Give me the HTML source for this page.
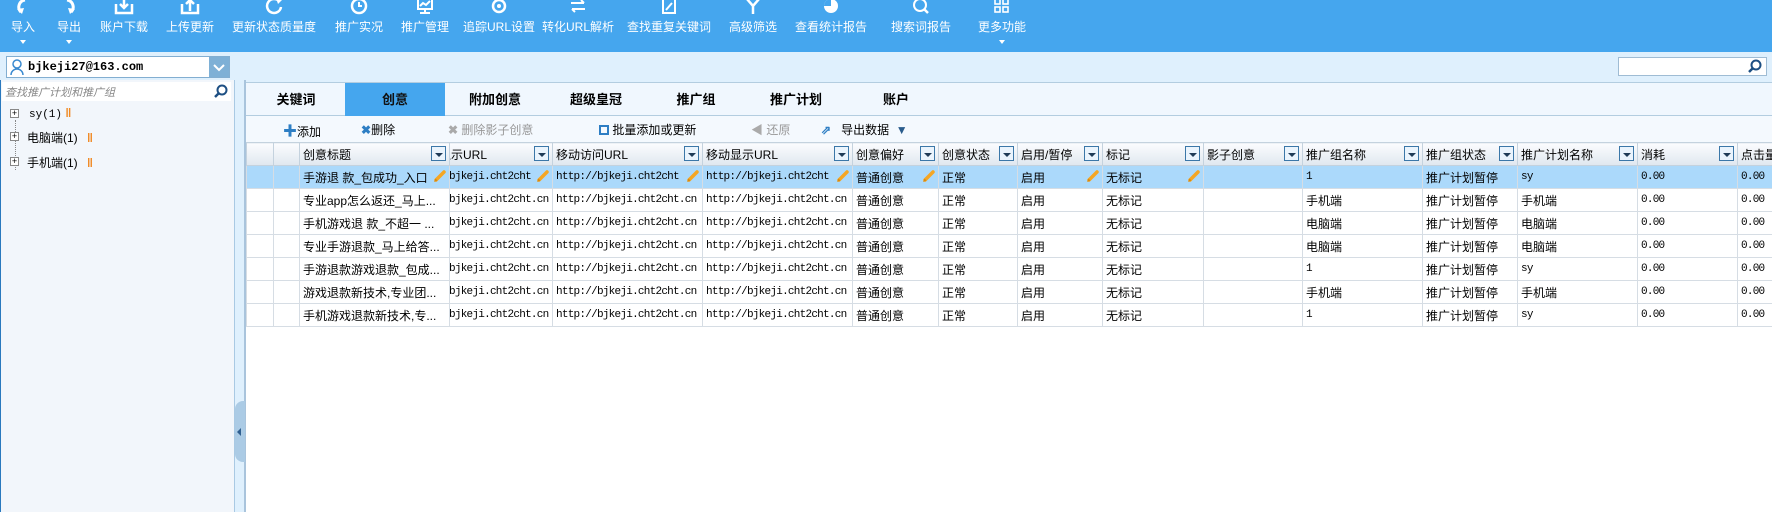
<!DOCTYPE html>
<html><head><meta charset="utf-8"><style>
*{margin:0;padding:0;box-sizing:border-box}
body{width:1772px;height:512px;overflow:hidden;position:relative;background:#fff;font-family:"Liberation Sans","Noto Sans CJK SC",sans-serif;font-size:12px;color:#000}
.a{position:absolute}
#tb{left:0;top:0;width:1772px;height:52px;background:#45a6ee}
.tbi{position:absolute;top:-2px;height:52px;color:#fff;font-size:12px;text-align:center;white-space:nowrap}
.tbi svg{display:block;margin:0 auto}
.tbi span{display:block;position:absolute;top:20px;left:50%;transform:translateX(-50%)}
.dd{position:absolute;top:42px;left:50%;margin-left:-3px;width:0;height:0;border-left:3px solid transparent;border-right:3px solid transparent;border-top:4px solid #fff}
#strip{left:0;top:52px;width:1772px;height:30px;background:#dff0fd}
#left{left:0;top:80px;width:234px;height:432px;background:#f2f6fb;border-left:1px solid #2a79be}
#split{left:234px;top:80px;width:12px;height:432px;background:#dff0fd;border-left:1px solid #a9c9e3;border-right:2px solid #a9c4dc}
#tabs{left:246px;top:82px;width:1526px;height:34px;background:#f0f7fe;border-top:1px solid #b3cde0;border-bottom:1px solid #b3cde0}
.tab{position:absolute;top:0;width:100px;height:33px;line-height:33px;text-align:center;font-weight:bold;font-size:13px}
#tools{left:246px;top:116px;width:1526px;height:27px;background:#f4f9fe}
.tl{position:absolute;top:5px;font-size:12px;white-space:nowrap}
table{position:absolute;left:246px;top:142px;border-collapse:collapse;table-layout:fixed;width:1560px}
td,th{border:1px solid #d6dde4;height:23px;padding:0 3px;overflow:hidden;white-space:nowrap;font-weight:normal;text-align:left;font-size:12px;position:relative}
th{background:linear-gradient(#fbfcfe,#dfe7ef);border-color:#c4d2de;height:23px}
th i{position:absolute;right:3px;top:3px;width:15px;height:15px;border:1px solid #3b77a8;background:#eaf4fd}
th i:after{content:"";position:absolute;left:3px;top:6px;border-left:4px solid transparent;border-right:4px solid transparent;border-top:4px solid #1f3b57}
tr.sel td{background:#abd9fb}
.m{font-family:"Liberation Mono",monospace;font-size:11px;letter-spacing:-0.75px}
.pen{position:absolute;right:2px;top:3px;width:14px;height:14px;background:#abd9fb}
</style></head><body>
<svg width="0" height="0" style="position:absolute"><defs><symbol id="p" viewBox="0 0 14 14"><path d="M3 11 L11 3" stroke="#f5a623" stroke-width="3.5" stroke-linecap="round"/><path d="M1 13 L2.5 9.5 L4.5 11.5z" fill="#d88a10"/></symbol></defs></svg>
<div id="tb" class="a">
 <div class="tbi" style="left:8px;width:30px"><svg width="20" height="18" viewBox="0 0 20 18"><path d="M12 2 A7 7 0 0 0 8 14" stroke="#fff" stroke-width="3" fill="none"/><path d="M4 11 L9 16 L11 10z" fill="#fff"/></svg><span>导入</span><div class="dd"></div></div>
 <div class="tbi" style="left:54px;width:30px"><svg width="20" height="18" viewBox="0 0 20 18"><path d="M8 2 A7 7 0 0 1 12 14" stroke="#fff" stroke-width="3" fill="none"/><path d="M16 11 L11 16 L9 10z" fill="#fff"/></svg><span>导出</span><div class="dd"></div></div>
 <div class="tbi" style="left:104px;width:40px"><svg width="20" height="17" viewBox="0 0 20 17"><path d="M2 6 V15 H18 V6" stroke="#fff" stroke-width="2.5" fill="none"/><path d="M10 0 V10 M6 6 L10 10 L14 6" stroke="#fff" stroke-width="2.5" fill="none"/></svg><span>账户下载</span></div>
 <div class="tbi" style="left:170px;width:40px"><svg width="20" height="17" viewBox="0 0 20 17"><path d="M2 6 V15 H18 V6" stroke="#fff" stroke-width="2.5" fill="none"/><path d="M10 13 V2 M6 6 L10 2 L14 6" stroke="#fff" stroke-width="2.5" fill="none"/></svg><span>上传更新</span></div>
 <div class="tbi" style="left:254px;width:40px"><svg width="20" height="17" viewBox="0 0 20 17"><path d="M15 3 A7 7 0 1 0 17 9" stroke="#fff" stroke-width="2.5" fill="none"/><path d="M12 0 L18 2 L14 6z" fill="#fff"/></svg><span>更新状态质量度</span></div>
 <div class="tbi" style="left:339px;width:40px"><svg width="20" height="17" viewBox="0 0 20 17"><circle cx="10" cy="8" r="7" stroke="#fff" stroke-width="2.5" fill="none"/><path d="M10 4 V8 H13" stroke="#fff" stroke-width="2" fill="none"/></svg><span>推广实况</span></div>
 <div class="tbi" style="left:405px;width:40px"><svg width="20" height="17" viewBox="0 0 20 17"><rect x="3" y="1" width="14" height="10" stroke="#fff" stroke-width="2" fill="none"/><path d="M5 15 H15 M10 11 V15 M5 8 L8 5 L11 7 L15 3" stroke="#fff" stroke-width="2" fill="none"/></svg><span>推广管理</span></div>
 <div class="tbi" style="left:479px;width:40px"><svg width="20" height="17" viewBox="0 0 20 17"><circle cx="10" cy="8" r="6" stroke="#fff" stroke-width="2.5" fill="none"/><circle cx="10" cy="8" r="2" fill="#fff"/></svg><span>追踪URL设置</span></div>
 <div class="tbi" style="left:558px;width:40px"><svg width="20" height="17" viewBox="0 0 20 17"><path d="M3 5 H16 M13 2 L16 5 M17 11 H4 M7 14 L4 11" stroke="#fff" stroke-width="2" fill="none"/></svg><span>转化URL解析</span></div>
 <div class="tbi" style="left:649px;width:40px"><svg width="20" height="17" viewBox="0 0 20 17"><rect x="4" y="0" width="12" height="15" stroke="#fff" stroke-width="2" fill="none"/><path d="M7 12 L13 5" stroke="#fff" stroke-width="2"/></svg><span>查找重复关键词</span></div>
 <div class="tbi" style="left:733px;width:40px"><svg width="20" height="17" viewBox="0 0 20 17"><path d="M4 1 L10 8 L16 1 M10 8 V16" stroke="#fff" stroke-width="2.5" fill="none"/></svg><span>高级筛选</span></div>
 <div class="tbi" style="left:811px;width:40px"><svg width="20" height="17" viewBox="0 0 20 17"><circle cx="10" cy="8" r="7" fill="#fff"/><path d="M10 8 V1 A7 7 0 0 0 3 8z" fill="#45a6ee"/></svg><span>查看统计报告</span></div>
 <div class="tbi" style="left:901px;width:40px"><svg width="20" height="17" viewBox="0 0 20 17"><circle cx="9" cy="7" r="6" stroke="#fff" stroke-width="2" fill="none"/><path d="M13 11 L17 15" stroke="#fff" stroke-width="2.5"/></svg><span>搜索词报告</span></div>
 <div class="tbi" style="left:982px;width:40px"><svg width="20" height="17" viewBox="0 0 20 17"><rect x="3" y="1" width="5" height="5" stroke="#fff" stroke-width="1.6" fill="none"/><rect x="11" y="1" width="5" height="5" stroke="#fff" stroke-width="1.6" fill="none"/><rect x="3" y="9" width="5" height="5" stroke="#fff" stroke-width="1.6" fill="none"/><rect x="11" y="9" width="5" height="5" stroke="#fff" stroke-width="1.6" fill="none"/></svg><span>更多功能</span><div class="dd"></div></div>
</div>
<div id="strip" class="a"></div>
<div class="a" style="left:6px;top:56px;width:224px;height:22px;background:#fff;border:1px solid #82aed1">
 <svg class="a" style="left:3px;top:2px" width="14" height="16" viewBox="0 0 14 16"><circle cx="7" cy="5" r="4" stroke="#3a8ad0" stroke-width="1.5" fill="none"/><path d="M1 16 A6 6 0 0 1 13 16" stroke="#3a8ad0" stroke-width="1.5" fill="none"/></svg>
 <span class="a m" style="left:21px;top:3px;font-weight:bold;font-size:12px;letter-spacing:0">bjkeji27@163.com</span>
 <div class="a" style="right:0;top:0;width:20px;height:20px;background:#7eb0d6"><svg width="20" height="20"><path d="M5 8 L10 13 L15 8" stroke="#fff" stroke-width="2" fill="none"/></svg></div>
</div>
<div class="a" style="left:1618px;top:57px;width:149px;height:19px;background:#fff;border:1px solid #9fbcd4"><svg class="a" style="right:4px;top:1px" width="15" height="15"><circle cx="9" cy="6" r="4.5" stroke="#1d4f83" stroke-width="2" fill="none"/><path d="M6 9 L2 13" stroke="#1d4f83" stroke-width="2.5"/></svg></div>
<div id="left" class="a">
 <div class="a" style="left:1px;top:2px;width:229px;height:19px;background:#fff">
  <span class="a" style="left:3px;top:2px;color:#888;font-style:italic;font-size:11px">查找推广计划和推广组</span>
  <svg class="a" style="right:3px;top:2px" width="15" height="15"><circle cx="9" cy="6" r="4.5" stroke="#1d4f83" stroke-width="2" fill="none"/><path d="M6 9 L2 13" stroke="#1d4f83" stroke-width="2.5"/></svg>
 </div>
 <div class="a" style="left:14px;top:40px;height:50px;border-left:1px dotted #888"></div>
 <div class="a" style="left:9px;top:29px;width:9px;height:9px;border:1px solid #888;background:#fff;font-size:9px;line-height:7px;text-align:center">+</div>
 <span class="a" style="left:28px;top:26px"><span class="m" style="letter-spacing:0">sy(1)</span> <b style="color:#f08a24">‖</b></span>
 <div class="a" style="left:9px;top:52px;width:9px;height:9px;border:1px solid #888;background:#fff;font-size:9px;line-height:7px;text-align:center">+</div>
 <span class="a" style="left:26px;top:49px;font-size:12px">电脑端(1) <b style="color:#f08a24;margin-left:6px">‖</b></span>
 <div class="a" style="left:9px;top:77px;width:9px;height:9px;border:1px solid #888;background:#fff;font-size:9px;line-height:7px;text-align:center">+</div>
 <span class="a" style="left:26px;top:74px;font-size:12px">手机端(1) <b style="color:#f08a24;margin-left:6px">‖</b></span>
</div>
<div id="split" class="a"><div class="a" style="left:0;top:321px;width:10px;height:61px;background:#abcbe5;border-radius:8px 0 0 8px"><div class="a" style="left:2px;top:27px;border-top:4px solid transparent;border-bottom:4px solid transparent;border-right:4px solid #2f5f90"></div></div></div>
<div id="tabs" class="a">
 <div class="tab" style="left:0">关键词</div>
 <div class="tab" style="left:99px;background:#45a6ee;color:#111">创意</div>
 <div class="tab" style="left:199px">附加创意</div>
 <div class="tab" style="left:300px">超级皇冠</div>
 <div class="tab" style="left:400px">推广组</div>
 <div class="tab" style="left:500px">推广计划</div>
 <div class="tab" style="left:600px">账户</div>
</div>
<div id="tools" class="a">
 <span class="tl" style="left:37px"><b style="color:#2d7ec4;font-size:14px">✚</b>添加</span>
 <span class="tl" style="left:115px"><b style="color:#2d7ec4">✖</b>删除</span>
 <span class="tl" style="left:202px;color:#999"><b style="color:#aaa">✖</b> 删除影子创意</span>
 <span class="tl" style="left:353px"><span style="display:inline-block;width:10px;height:10px;border:2px solid #2d7ec4;vertical-align:-1px"></span> 批量添加或更新</span>
 <span class="tl" style="left:505px;color:#999"><b style="color:#aaa">◀</b> 还原</span>
 <span class="tl" style="left:575px"><b style="color:#2d7ec4">⇗</b>&nbsp;&nbsp; 导出数据 &nbsp;<span style="color:#2a5c8c">▼</span></span>
</div>
<table>
<colgroup><col style="width:27px"><col style="width:26px"><col style="width:150px"><col style="width:103px"><col style="width:150px"><col style="width:150px"><col style="width:86px"><col style="width:79px"><col style="width:85px"><col style="width:101px"><col style="width:99px"><col style="width:120px"><col style="width:95px"><col style="width:120px"><col style="width:100px"><col style="width:89px"></colgroup>
<tr><th></th><th></th><th>创意标题<i></i></th><th><span style="margin-left:-14px">显示URL</span><i></i></th><th>移动访问URL<i></i></th><th>移动显示URL<i></i></th><th>创意偏好<i></i></th><th>创意状态<i></i></th><th>启用/暂停<i></i></th><th>标记<i></i></th><th>影子创意<i></i></th><th>推广组名称<i></i></th><th>推广组状态<i></i></th><th>推广计划名称<i></i></th><th>消耗<i></i></th><th>点击量</th></tr>
<tr class="sel"><td></td><td></td><td>手游退 款_包成功_入口<svg class="pen"><use href="#p"/></svg></td><td class="m"><span style="margin-left:-4px">bjkeji.cht2cht</span><svg class="pen"><use href="#p"/></svg></td><td class="m">http://bjkeji.cht2cht<svg class="pen"><use href="#p"/></svg></td><td class="m">http://bjkeji.cht2cht<svg class="pen"><use href="#p"/></svg></td><td>普通创意<svg class="pen"><use href="#p"/></svg></td><td>正常</td><td>启用<svg class="pen"><use href="#p"/></svg></td><td>无标记<svg class="pen"><use href="#p"/></svg></td><td></td><td class="m">1</td><td>推广计划暂停</td><td class="m">sy</td><td class="m">0.00</td><td class="m">0.00</td></tr>
<tr><td></td><td></td><td>专业app怎么返还_马上...</td><td class="m"><span style="margin-left:-4px">bjkeji.cht2cht.cn</span></td><td class="m">http://bjkeji.cht2cht.cn</td><td class="m">http://bjkeji.cht2cht.cn</td><td>普通创意</td><td>正常</td><td>启用</td><td>无标记</td><td></td><td>手机端</td><td>推广计划暂停</td><td>手机端</td><td class="m">0.00</td><td class="m">0.00</td></tr>
<tr><td></td><td></td><td>手机游戏退 款_不超一 ...</td><td class="m"><span style="margin-left:-4px">bjkeji.cht2cht.cn</span></td><td class="m">http://bjkeji.cht2cht.cn</td><td class="m">http://bjkeji.cht2cht.cn</td><td>普通创意</td><td>正常</td><td>启用</td><td>无标记</td><td></td><td>电脑端</td><td>推广计划暂停</td><td>电脑端</td><td class="m">0.00</td><td class="m">0.00</td></tr>
<tr><td></td><td></td><td>专业手游退款_马上给答...</td><td class="m"><span style="margin-left:-4px">bjkeji.cht2cht.cn</span></td><td class="m">http://bjkeji.cht2cht.cn</td><td class="m">http://bjkeji.cht2cht.cn</td><td>普通创意</td><td>正常</td><td>启用</td><td>无标记</td><td></td><td>电脑端</td><td>推广计划暂停</td><td>电脑端</td><td class="m">0.00</td><td class="m">0.00</td></tr>
<tr><td></td><td></td><td>手游退款游戏退款_包成...</td><td class="m"><span style="margin-left:-4px">bjkeji.cht2cht.cn</span></td><td class="m">http://bjkeji.cht2cht.cn</td><td class="m">http://bjkeji.cht2cht.cn</td><td>普通创意</td><td>正常</td><td>启用</td><td>无标记</td><td></td><td class="m">1</td><td>推广计划暂停</td><td class="m">sy</td><td class="m">0.00</td><td class="m">0.00</td></tr>
<tr><td></td><td></td><td>游戏退款新技术,专业团...</td><td class="m"><span style="margin-left:-4px">bjkeji.cht2cht.cn</span></td><td class="m">http://bjkeji.cht2cht.cn</td><td class="m">http://bjkeji.cht2cht.cn</td><td>普通创意</td><td>正常</td><td>启用</td><td>无标记</td><td></td><td>手机端</td><td>推广计划暂停</td><td>手机端</td><td class="m">0.00</td><td class="m">0.00</td></tr>
<tr><td></td><td></td><td>手机游戏退款新技术,专...</td><td class="m"><span style="margin-left:-4px">bjkeji.cht2cht.cn</span></td><td class="m">http://bjkeji.cht2cht.cn</td><td class="m">http://bjkeji.cht2cht.cn</td><td>普通创意</td><td>正常</td><td>启用</td><td>无标记</td><td></td><td class="m">1</td><td>推广计划暂停</td><td class="m">sy</td><td class="m">0.00</td><td class="m">0.00</td></tr>
</table>
</body></html>
